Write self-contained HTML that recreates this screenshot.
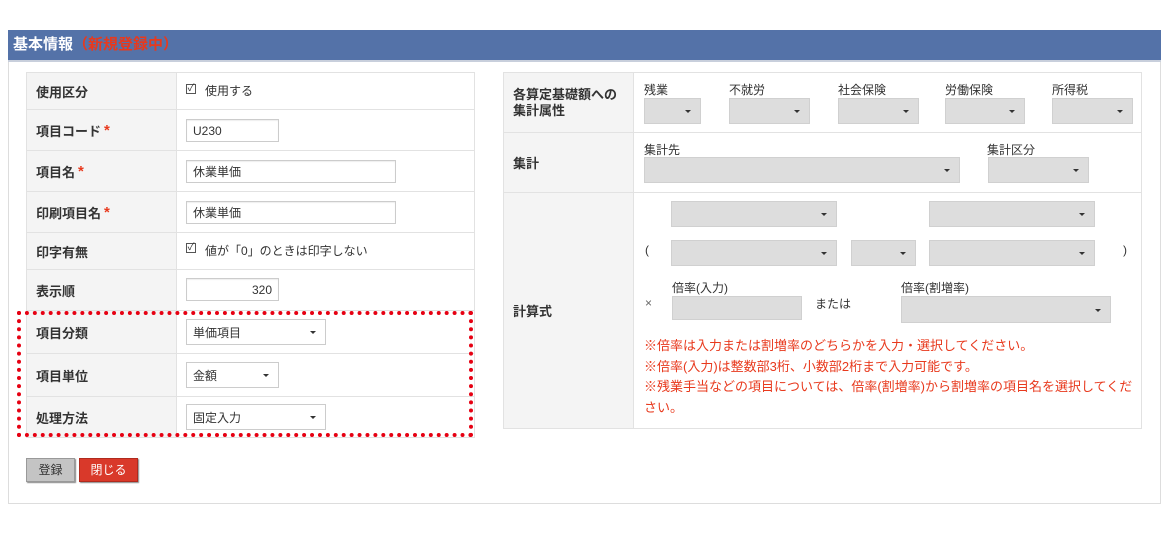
<!DOCTYPE html>
<html><head><meta charset="utf-8"><style>
*{box-sizing:border-box;margin:0;padding:0}
body{width:1169px;height:534px;background:#fff;position:relative;font-family:"Liberation Sans","Noto Sans CJK JP",sans-serif;font-size:12px;color:#333;overflow:hidden}
.a{position:absolute}
.hd{left:8px;top:30px;width:1153px;height:32px;background:#5472a8;border-bottom:2px solid #c8cfdc;color:#fff;font-weight:bold;font-size:15px;line-height:30px;padding-left:5px}
.hd span{color:#e8391d;font-weight:bold}
.box{left:8px;top:62px;width:1153px;height:442px;border:1px solid #ddd;border-top:none}
.lab{background:#f4f4f4;border:1px solid #e2e2e2;font-weight:bold;font-size:13px;padding-left:9px;display:flex;align-items:center;color:#333}
.val{border:1px solid #e2e2e2;background:#fff}
.in{border:1px solid #ccc;background:#fff;font-size:12px;padding-left:6px;display:flex;align-items:center;box-shadow:inset 0 1px 1px #eee}
.sel{border:1px solid #ccc;background:#fff;font-size:12px;padding-left:6px;display:flex;align-items:center}
.sel:after{content:"";position:absolute;right:9px;top:50%;margin-top:-1px;border:3px solid transparent;border-top:3px solid #333;border-bottom:none}
.gs{background:#ddd;border:1px solid #d0d0d0}
.gs:after{content:"";position:absolute;right:9px;top:50%;margin-top:-1px;border:3px solid transparent;border-top:3px solid #333;border-bottom:none}
.star{color:#e8391d;font-size:15px;margin-left:3px}
.cb{width:10px;height:10px;border:1px solid #555;font-size:10px;line-height:8px;text-align:center}
.t{font-size:12px;color:#333;white-space:nowrap}
.r{color:#e8391d;font-size:13px;line-height:20.5px}
</style></head><body>
<div class="a hd">基本情報<span>（新規登録中）</span></div>
<div class="a box"></div>

<div class="a lab" style="left:26px;top:72px;width:151px;height:38px">使用区分</div>
<div class="a val" style="left:176px;top:72px;width:299px;height:38px"></div>
<div class="a lab" style="left:26px;top:109px;width:151px;height:42px">項目コード<span class="star">*</span></div>
<div class="a val" style="left:176px;top:109px;width:299px;height:42px"></div>
<div class="a lab" style="left:26px;top:150px;width:151px;height:42px">項目名<span class="star">*</span></div>
<div class="a val" style="left:176px;top:150px;width:299px;height:42px"></div>
<div class="a lab" style="left:26px;top:191px;width:151px;height:42px">印刷項目名<span class="star">*</span></div>
<div class="a val" style="left:176px;top:191px;width:299px;height:42px"></div>
<div class="a lab" style="left:26px;top:232px;width:151px;height:38px">印字有無</div>
<div class="a val" style="left:176px;top:232px;width:299px;height:38px"></div>
<div class="a lab" style="left:26px;top:269px;width:151px;height:42px">表示順</div>
<div class="a val" style="left:176px;top:269px;width:299px;height:42px"></div>
<div class="a lab" style="left:26px;top:310px;width:151px;height:44px">項目分類</div>
<div class="a val" style="left:176px;top:310px;width:299px;height:44px"></div>
<div class="a lab" style="left:26px;top:353px;width:151px;height:44px">項目単位</div>
<div class="a val" style="left:176px;top:353px;width:299px;height:44px"></div>
<div class="a lab" style="left:26px;top:396px;width:151px;height:42px">処理方法</div>
<div class="a val" style="left:176px;top:396px;width:299px;height:42px"></div>

<div class="a cb" style="left:186px;top:84px">✓</div><div class="a t" style="left:205px;top:82px">使用する</div>
<div class="a in" style="left:186px;top:119px;width:93px;height:23px">U230</div>
<div class="a in" style="left:186px;top:160px;width:210px;height:23px">休業単価</div>
<div class="a in" style="left:186px;top:201px;width:210px;height:23px">休業単価</div>
<div class="a cb" style="left:186px;top:243px">✓</div><div class="a t" style="left:205px;top:242px">値が「0」のときは印字しない</div>
<div class="a in" style="left:186px;top:278px;width:93px;height:23px;justify-content:flex-end;padding-right:6px">320</div>
<div class="a sel" style="left:186px;top:319px;width:140px;height:26px">単価項目</div>
<div class="a sel" style="left:186px;top:362px;width:93px;height:26px">金額</div>
<div class="a sel" style="left:186px;top:404px;width:140px;height:26px">固定入力</div>
<div class="a" style="left:17px;top:311px;width:456px;height:126px;border:4px dotted #e60012"></div>

<div class="a" style="left:26px;top:458px;width:49px;height:24px;background:#c4c4c4;border:1px solid #999;box-shadow:1px 1px 1px #888;font-size:12px;text-align:center;line-height:22px">登録</div>
<div class="a" style="left:79px;top:458px;width:59px;height:24px;background:#d9392a;border:1px solid #b02a1e;box-shadow:1px 1px 1px #888;color:#fff;font-size:12px;text-align:center;line-height:22px">閉じる</div>

<div class="a lab" style="left:503px;top:72px;width:131px;height:61px;line-height:16px">各算定基礎額への<br>集計属性</div>
<div class="a val" style="left:633px;top:72px;width:509px;height:61px"></div>
<div class="a lab" style="left:503px;top:132px;width:131px;height:61px">集計</div>
<div class="a val" style="left:633px;top:132px;width:509px;height:61px"></div>
<div class="a lab" style="left:503px;top:192px;width:131px;height:237px">計算式</div>
<div class="a val" style="left:633px;top:192px;width:509px;height:237px"></div>

<div class="a t" style="left:644px;top:81px">残業</div>
<div class="a t" style="left:729px;top:81px">不就労</div>
<div class="a t" style="left:838px;top:81px">社会保険</div>
<div class="a t" style="left:945px;top:81px">労働保険</div>
<div class="a t" style="left:1052px;top:81px">所得税</div>
<div class="a gs" style="left:644px;top:98px;width:57px;height:26px"></div>
<div class="a gs" style="left:729px;top:98px;width:81px;height:26px"></div>
<div class="a gs" style="left:838px;top:98px;width:81px;height:26px"></div>
<div class="a gs" style="left:945px;top:98px;width:80px;height:26px"></div>
<div class="a gs" style="left:1052px;top:98px;width:81px;height:26px"></div>

<div class="a t" style="left:644px;top:141px">集計先</div>
<div class="a t" style="left:987px;top:141px">集計区分</div>
<div class="a gs" style="left:644px;top:157px;width:316px;height:26px"></div>
<div class="a gs" style="left:988px;top:157px;width:101px;height:26px"></div>

<div class="a gs" style="left:671px;top:201px;width:166px;height:26px"></div>
<div class="a gs" style="left:929px;top:201px;width:166px;height:26px"></div>
<div class="a t" style="left:645px;top:243px">(</div>
<div class="a gs" style="left:671px;top:240px;width:166px;height:26px"></div>
<div class="a gs" style="left:851px;top:240px;width:65px;height:26px"></div>
<div class="a gs" style="left:929px;top:240px;width:166px;height:26px"></div>
<div class="a t" style="left:1123px;top:243px">)</div>

<div class="a t" style="left:645px;top:296px;color:#666">×</div>
<div class="a t" style="left:672px;top:279px">倍率(入力)</div>
<div class="a" style="left:672px;top:296px;width:130px;height:24px;background:#ddd;border:1px solid #d0d0d0"></div>
<div class="a t" style="left:815px;top:295px">または</div>
<div class="a t" style="left:901px;top:279px">倍率(割増率)</div>
<div class="a gs" style="left:901px;top:296px;width:210px;height:27px"></div>

<div class="a r" style="left:644px;top:336px;width:492px">※倍率は入力または割増率のどちらかを入力・選択してください。<br>※倍率(入力)は整数部3桁、小数部2桁まで入力可能です。<br>※残業手当などの項目については、倍率(割増率)から割増率の項目名を選択してください。</div>
</body></html>
